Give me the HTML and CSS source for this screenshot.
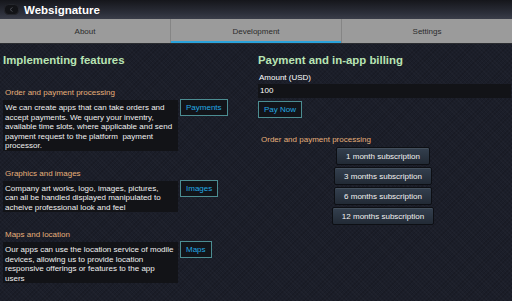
FILE: index.html
```html
<!DOCTYPE html>
<html lang="en">
<head>
  <meta charset="UTF-8" />
  <title>Websignature</title>
  <link rel="stylesheet" href="styles.css">
</head>
<body>
  <div class="titlebar">
    <span class="app-icon">
      <svg width="15" height="11" viewBox="0 0 15 11"><rect x="0.5" y="0.5" width="14" height="10" rx="4" fill="#121317" stroke="#24262c"/><path d="M8.5 3.5 L6 5.5 L8.5 7.5" fill="none" stroke="#4a4c53" stroke-width="1"/></svg>
    </span>
    <span class="app-title">Websignature</span>
  </div>
  <div class="tabs">
    <div class="tab">About</div>
    <div class="tab active">Development</div>
    <div class="tab">Settings</div>
  </div>

  <div class="content">
    <div class="col">
      <h2>Implementing features</h2>

      <div class="feature first">
        <div class="label">Order and payment processing</div>
        <div class="row">
          <p class="desc">We can create apps that can take orders and accept payments. We query your inventry, available time slots, where applicable and send payment request to the platform&nbsp; payment processor.</p>
          <button class="link-btn">Payments</button>
        </div>
      </div>

      <div class="feature">
        <div class="label">Graphics and images</div>
        <div class="row">
          <p class="desc">Company art works, logo, images, pictures,<br>can all be handled displayed manipulated to acheive professional look and feel</p>
          <button class="link-btn">Images</button>
        </div>
      </div>

      <div class="feature">
        <div class="label">Maps and location</div>
        <div class="row">
          <p class="desc">Our apps can use the location service of modile devices, allowing us to provide location responsive offerings or features to the app users</p>
          <button class="link-btn">Maps</button>
        </div>
      </div>
    </div>

    <div class="col right">
      <h2>Payment and in-app billing</h2>
      <div class="field-label">Amount (USD)</div>
      <div class="input">100</div>
      <button class="link-btn pay">Pay Now</button>

      <div class="label sub-label">Order and payment processing</div>
      <div class="subs">
        <button class="sub-btn">1 month subscription</button>
        <button class="sub-btn">3 months subscription</button>
        <button class="sub-btn">6 months subscription</button>
        <button class="sub-btn">12 months subscription</button>
      </div>
    </div>
  </div>
</body>
</html>
```

FILE: styles.css
```css
* {
  box-sizing: border-box;
}
body {
  margin: 0;
  width: 512px;
  height: 301px;
  overflow: hidden;
  font-family: 'Liberation Sans', Arial, sans-serif;
  color: #fff;
  background-color: #1b1e29;
  background-image:
    repeating-linear-gradient(45deg, rgba(255,255,255,0.02) 0 1px, transparent 1px 3px),
    repeating-linear-gradient(-45deg, rgba(0,0,0,0.12) 0 1px, transparent 1px 3px);
}
.titlebar {
  height: 19px;
  display: flex;
  align-items: center;
  padding-left: 4px;
  gap: 5px;
  background: linear-gradient(to bottom, #15161b, #2c2f3a 70%, #3a3d49);
}
.app-icon {
  display: flex;
}
.app-title {
  font-weight: bold;
  font-size: 11.5px;
}
.tabs {
  display: flex;
  height: 25px;
  background: #9b9b9b;
  border-bottom: 1px solid #2a2c30;
}
.tab {
  flex: 1;
  display: flex;
  align-items: center;
  justify-content: center;
  font-size: 8px;
  color: #2b2b2b;
  border-right: 1px solid #858585;
}
.tab:last-child {
  border-right: none;
}
.tab.active {
  box-shadow: inset 0 -2px 0 #2ba3dc;
}
.content {
  display: grid;
  grid-template-columns: 256px 256px;
}
.col {
  padding: 8px 0 0 3px;
}
.col.right {
  padding-left: 2px;
}
h2 {
  margin: 0;
  font-size: 11.4px;
  font-weight: bold;
  color: #b9e4b4;
  line-height: 16px;
}
.label {
  font-size: 8px;
  color: #e6b07a;
  padding-left: 2px;
  line-height: 10px;
  margin-bottom: 2px;
}
.feature {
  margin-top: 18px;
}
.feature.first {
  margin-top: 20px;
}
.row {
  display: flex;
  align-items: flex-start;
  gap: 2px;
}
.desc {
  margin: 0;
  width: 175px;
  padding: 3px 3px 0 2px;
  font-size: 8px;
  line-height: 9.5px;
  color: #f0f0f0;
  background: #121317;
}
.link-btn {
  font-family: inherit;
  font-size: 8px;
  color: #22a9e3;
  background: #121419;
  border: 1px solid #4c8d92;
  padding: 0 5px;
  height: 17px;
  margin-top: -1px;
}
.field-label {
  font-size: 8px;
  margin-top: 5px;
  padding-left: 1px;
  line-height: 10px;
}
.input {
  width: 253px;
  height: 14px;
  margin-top: 1px;
  background: #121317;
  font-size: 8px;
  line-height: 14px;
  padding-left: 2px;
}
.link-btn.pay {
  margin-top: 2px;
  margin-left: 0;
  height: 17px;
  padding: 0 5px;
}
.sub-label {
  margin-top: 17px;
  padding-left: 3px;
}
.subs {
  display: flex;
  flex-direction: column;
  align-items: center;
  gap: 2px;
  width: 250px;
}
.sub-btn {
  font-family: inherit;
  font-size: 8px;
  color: #f2f2f2;
  height: 18px;
  padding: 0 9px;
  border: 1px solid #0d0f14;
  border-radius: 2px;
  background: linear-gradient(to bottom, #34404f, #222a35);
  box-shadow: inset 0 1px 0 rgba(255,255,255,0.08);
}
```
